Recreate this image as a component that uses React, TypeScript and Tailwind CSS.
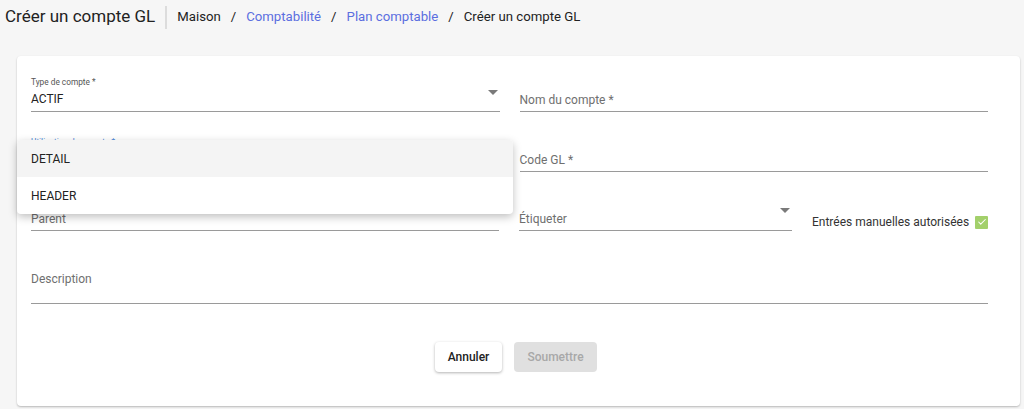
import { Check } from 'lucide-react'

const font = { fontFamily: 'Roboto, "Liberation Sans", sans-serif' }

function Caret() {
  return (
    <svg width="10" height="5" viewBox="0 0 10 5" className="shrink-0">
      <path d="M0 0 L10 0 L5 5 Z" fill="#7a7a7a" />
    </svg>
  )
}

interface FieldProps {
  label:     string
  value?:    string
  select?:   boolean
  focused?:  boolean
  className?: string
}

// Underlined field, material style: small floating label when a value is set
function Field({ label, value, select, focused, className = '' }: FieldProps) {
  const floated = value !== undefined || focused
  return (
    <div className={'relative h-[40px] border-b border-[#9a9a9a] ' + className}>
      {floated ? (
        <>
          <div className={'absolute left-0 top-[5px] text-[8.3px] leading-[11px] ' + (focused ? 'text-[#3f7fd6]' : 'text-[#555]')}>
            {label}
          </div>
          <div className="absolute left-0 top-[19px] text-[12px] leading-[16px] text-[#222]">{value}</div>
        </>
      ) : (
        <div className="absolute left-0 top-[20px] text-[12px] leading-[16px] text-[#6f6f6f]">{label}</div>
      )}
      {select && (
        <div className={'absolute right-[2px] ' + (floated ? 'top-[18px]' : 'top-[17px]')}>
          <Caret />
        </div>
      )}
    </div>
  )
}

export default function App() {
  return (
    <div className="min-h-[409px] bg-[#f6f6f6] pb-[3px]" style={font}>
      <header className="flex h-[34px] items-center pl-[5px]">
        <h1 className="text-[17px] text-[#222]">Créer un compte GL</h1>
        <div className="ml-[10px] mr-[10px] h-[23px] w-[2px] bg-[#dcdcdc]" />
        <nav className="flex items-center gap-[10px] text-[13.2px] text-[#222]">
          <span>Maison</span>
          <span>/</span>
          <span className="text-[#5b6ee0]">Comptabilité</span>
          <span>/</span>
          <span className="text-[#5b6ee0]">Plan comptable</span>
          <span>/</span>
          <span>Créer un compte GL</span>
        </nav>
      </header>

      <div className="relative ml-[17px] mr-[4px] mt-[22px] rounded-[4px] bg-white pb-[34px] pl-[14px] pr-[32px] pt-[16px] shadow-[0_1px_2px_rgba(0,0,0,0.25)]">
        <div className="grid grid-cols-2 gap-x-[20px] gap-y-[20px]">
          <Field label="Type de compte *" value="ACTIF" select />
          <Field label="Nom du compte *" />
          <Field label="Utilisation du compte *" value="" focused select />
          <Field label="Code GL *" />
        </div>

        <div className="mt-[19px] flex items-end">
          <Field label="Parent" select className="w-[468px] shrink-0" />
          <Field label="Étiqueter" select className="ml-[20px] w-[273px] shrink-0" />
          <div className="mb-[2px] ml-[20px] flex h-[14px] flex-1 items-center justify-between">
            <span className="whitespace-nowrap text-[12px] text-[#333]">Entrées manuelles autorisées</span>
            <span className="flex h-[13px] w-[13px] items-center justify-center rounded-[1px] bg-[#a3d06b]">
              <Check size={10} strokeWidth={2.5} className="text-white" />
            </span>
          </div>
        </div>

        <div className="relative mt-[20px] h-[53px] border-b border-[#9a9a9a]">
          <div className="absolute left-0 top-[20px] text-[12px] leading-[16px] text-[#6f6f6f]">Description</div>
        </div>

        <div className="mt-[38px] flex justify-center gap-[12px] pl-[13px]">
          <button className="h-[30px] w-[67px] rounded-[4px] bg-white text-[12px] font-medium text-[#222] shadow-[0_1px_3px_rgba(0,0,0,0.3)]">
            Annuler
          </button>
          <button className="h-[30px] w-[83px] rounded-[4px] bg-[#e0e0e0] text-[12px] font-medium text-[#a8a8a8]" disabled>
            Soumettre
          </button>
        </div>

        {/* open select menu for "Utilisation du compte" */}
        <ul className="absolute left-0 top-[84px] w-[496px] overflow-hidden rounded-[4px] bg-white shadow-[0_3px_8px_rgba(0,0,0,0.25)]">
          <li className="flex h-[37px] items-center bg-[#f4f4f4] pl-[14px] text-[12px] text-[#222]">DETAIL</li>
          <li className="flex h-[37px] items-center pl-[14px] text-[12px] text-[#222]">HEADER</li>
        </ul>
      </div>
    </div>
  )
}
